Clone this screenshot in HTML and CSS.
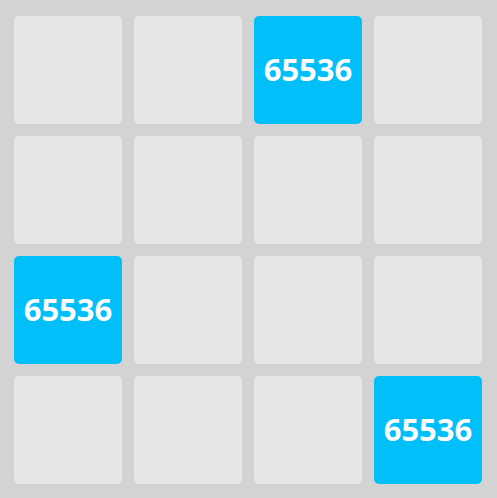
FILE: index.html
```html
<!DOCTYPE html>
<html>
<head>
<meta charset="utf-8">
<link rel="stylesheet" href="styles.css">
</head>
<body>
<div class="board">
  <div class="cell"></div>
  <div class="cell"></div>
  <div class="cell tile">65536</div>
  <div class="cell"></div>
  <div class="cell"></div>
  <div class="cell"></div>
  <div class="cell"></div>
  <div class="cell"></div>
  <div class="cell tile">65536</div>
  <div class="cell"></div>
  <div class="cell"></div>
  <div class="cell"></div>
  <div class="cell"></div>
  <div class="cell"></div>
  <div class="cell"></div>
  <div class="cell tile">65536</div>
</div>
</body>
</html>
```
FILE: styles.css
```css
html, body {
  margin: 0;
  padding: 0;
  background: #d3d3d3;
}
.board {
  width: 497px;
  height: 498px;
  box-sizing: border-box;
  padding: 16px 15px 14px 14px;
  display: grid;
  grid-template-columns: repeat(4, 108px);
  grid-template-rows: repeat(4, 108px);
  gap: 12px;
  background: #d3d3d3;
}
.cell {
  background: #e6e6e6;
  border-radius: 5px;
  display: flex;
  align-items: center;
  justify-content: center;
  font-family: "Open Sans", sans-serif;
  font-weight: 700;
  font-size: 31px;
  line-height: 1;
  padding-bottom: 2px;
  box-sizing: border-box;
  color: #ffffff;
}
.tile {
  background: #00bff9;
}
```
